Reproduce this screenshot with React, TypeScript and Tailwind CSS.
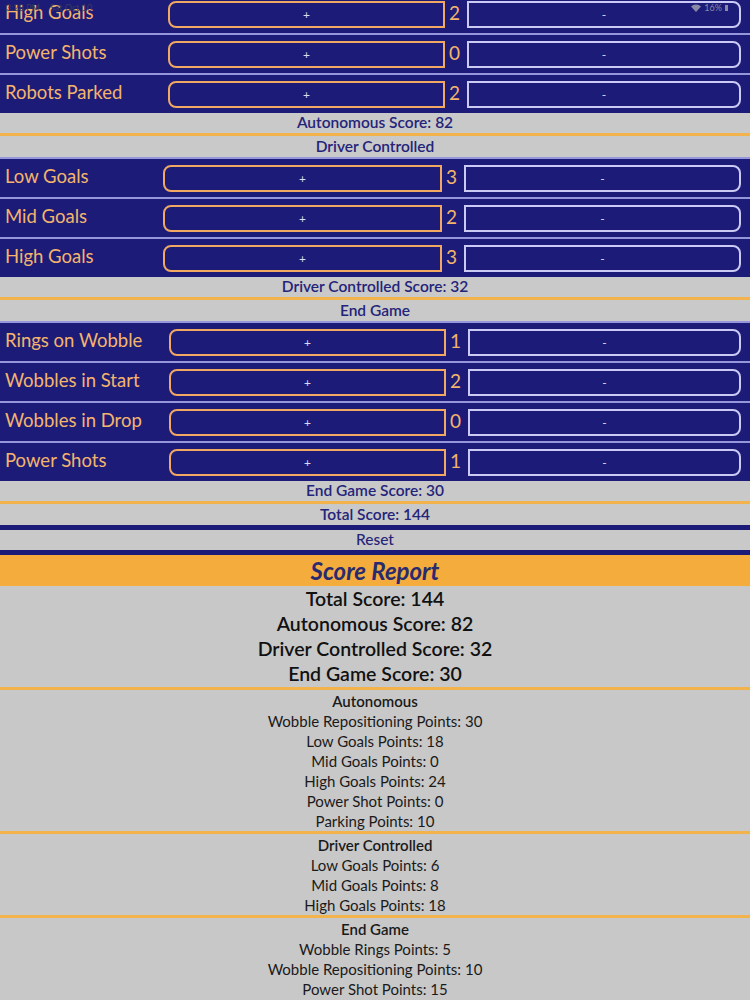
import React from "react";

type RowData = { label: string; count: number };

function Row({ label, count, lw, pw }: RowData & { lw: string; pw: string }) {
  return (
    <div className="flex h-[40px] items-center border-t-2 border-[#9696dc] bg-[#1c1c78]">
      <div className={`${lw} shrink-0 whitespace-nowrap pb-[4px] pl-[5px] text-[18.5px] leading-none text-[#f4b46c]`}>{label}</div>
      <div className={`${pw} flex h-[27px] shrink-0 items-center justify-center rounded-l-[8px] border-2 border-[#f0a862] pt-[2px] text-[12px] text-[#dcdcf0]`}>
        +
      </div>
      <div className="w-[22px] shrink-0 pb-[3px] pl-[4px] text-[19px] leading-none text-[#f4b46c]">{count}</div>
      <div className="mr-[9px] flex h-[27px] flex-1 items-center justify-center rounded-r-[8px] border-2 border-[#cacaf4] pt-[2px] text-[12px] text-[#dcdcf0]">
        -
      </div>
    </div>
  );
}

function Band({ children, h }: { children: React.ReactNode; h: string }) {
  return (
    <div className={`${h} flex items-center justify-center bg-[#c9c9c9] text-[15.5px] font-semibold leading-none text-[#24247a]`}>
      {children}
    </div>
  );
}

const OrangeLine = () => <div className="h-[3px] bg-[#f2b24c]" />;
const NavyLine = () => <div className="h-[5px] bg-[#1c1c78]" />;

const auto: RowData[] = [
  { label: "High Goals", count: 2 },
  { label: "Power Shots", count: 0 },
  { label: "Robots Parked", count: 2 },
];
const driver: RowData[] = [
  { label: "Low Goals", count: 3 },
  { label: "Mid Goals", count: 2 },
  { label: "High Goals", count: 3 },
];
const endGame: RowData[] = [
  { label: "Rings on Wobble", count: 1 },
  { label: "Wobbles in Start", count: 2 },
  { label: "Wobbles in Drop", count: 0 },
  { label: "Power Shots", count: 1 },
];

function ReportBlock({ title, items }: { title: string; items: string[] }) {
  return (
    <div className="flex flex-col items-center text-[15px] leading-[20px] text-[#1a1a1a]">
      <div className="font-semibold">{title}</div>
      {items.map((t, i) => (
        <div key={i}>{t}</div>
      ))}
    </div>
  );
}

export default function App() {
  return (
    <div className="relative h-[1000px] w-[750px] overflow-hidden bg-[#c8c8c8] font-[family-name:Lato,'Open_Sans',sans-serif]">
      <div className="-mt-[7px]">
        {auto.map((r) => (
          <Row key={r.label} {...r} lw="w-[168px]" pw="w-[277px]" />
        ))}
      </div>
      <Band h="h-[20px]">Autonomous Score: 82</Band>
      <OrangeLine />
      <Band h="h-[21px]">Driver Controlled</Band>
      {driver.map((r) => (
        <Row key={r.label} {...r} lw="w-[163px]" pw="w-[279px]" />
      ))}
      <Band h="h-[20px]">Driver Controlled Score: 32</Band>
      <OrangeLine />
      <Band h="h-[21px]">End Game</Band>
      {endGame.map((r) => (
        <Row key={r.label} {...r} lw="w-[169px]" pw="w-[277px]" />
      ))}
      <Band h="h-[20px]">End Game Score: 30</Band>
      <OrangeLine />
      <Band h="h-[21px]">Total Score: 144</Band>
      <NavyLine />
      <Band h="h-[20px]">
        <span className="font-medium">Reset</span>
      </Band>
      <NavyLine />
      <div className="flex h-[31px] items-center justify-center bg-[#f4ac3c] text-[24px] font-bold italic leading-none text-[#2a2a6e]">
        Score Report
      </div>
      <div className="flex flex-col items-center pb-[1px] text-[19.5px] font-semibold leading-[25px] text-[#111]">
        <div>Total Score: 144</div>
        <div>Autonomous Score: 82</div>
        <div>Driver Controlled Score: 32</div>
        <div>End Game Score: 30</div>
      </div>
      <OrangeLine />
      <div className="pt-[1px]">
        <ReportBlock
          title="Autonomous"
          items={[
            "Wobble Repositioning Points: 30",
            "Low Goals Points: 18",
            "Mid Goals Points: 0",
            "High Goals Points: 24",
            "Power Shot Points: 0",
            "Parking Points: 10",
          ]}
        />
      </div>
      <OrangeLine />
      <div className="pt-[1px]">
        <ReportBlock
          title="Driver Controlled"
          items={["Low Goals Points: 6", "Mid Goals Points: 8", "High Goals Points: 18"]}
        />
      </div>
      <OrangeLine />
      <div className="pt-[1px]">
        <ReportBlock
          title="End Game"
          items={["Wobble Rings Points: 5", "Wobble Repositioning Points: 10", "Power Shot Points: 15"]}
        />
      </div>

      <div className="absolute left-[6px] top-[1px] flex gap-[10px] text-[9px] text-[#3a3a5a]">
        <span>3:28 PM</span>
        <span>Sat Oct 10</span>
      </div>
      <div className="absolute right-[22px] top-[1px] flex items-center gap-[3px] text-[9px] text-[#8a8aa8]">
        <svg width="10" height="8" viewBox="0 0 10 8" fill="#8a8aa8">
          <path d="M5 8 L0 2.5 A7 7 0 0 1 10 2.5 Z" />
        </svg>
        <span>16%</span>
        <span className="inline-block h-[6px] w-[3px] bg-[#8a8aa8]" />
      </div>
    </div>
  );
}
